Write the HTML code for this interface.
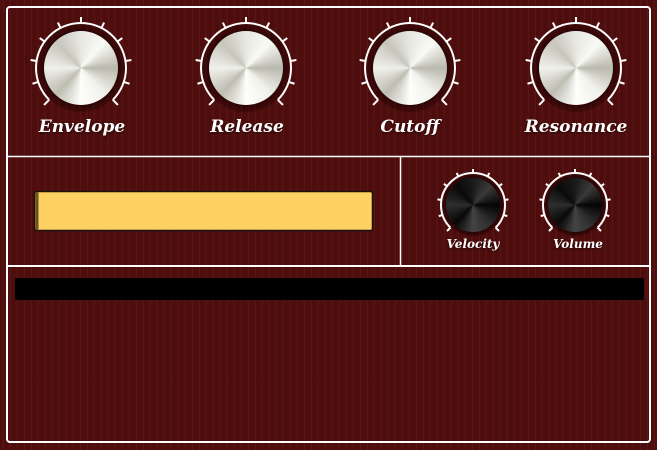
<!DOCTYPE html>
<html><head><meta charset="utf-8"><style>
html,body{margin:0;padding:0}
body{width:657px;height:450px;overflow:hidden;position:relative;
background:#520e0e;
background-image:repeating-linear-gradient(90deg,rgba(0,0,0,.08) 0 1px,rgba(255,255,255,0) 1px 3px,rgba(255,255,255,.03) 3px 4px,rgba(0,0,0,.05) 4px 7px);
font-family:"DejaVu Serif","Liberation Serif",serif;}
.abs{position:absolute}
.knob{position:absolute;border-radius:50%;}
.silver{background:conic-gradient(#e8e8e2,#fafaf5 12%,#b9b9ae 25%,#f2f2ec 38%,#fefefa 50%,#bdbdb2 62%,#f0f0ea 75%,#c6c6bc 88%,#e8e8e2);box-shadow:0 0 3px 2px rgba(0,0,0,.35)}
.black{background:conic-gradient(#1a1a1a,#3a3a3a 12%,#050505 25%,#2d2d2d 38%,#444 50%,#080808 62%,#2e2e2e 75%,#0a0a0a 88%,#1a1a1a);box-shadow:0 0 3px 2px rgba(0,0,0,.4)}
.lbl{position:absolute;color:#fff;font-weight:bold;font-style:italic;text-align:center;transform:translateX(-50%);white-space:nowrap;text-shadow:0 1px 2px rgba(0,0,0,.6)}
</style></head><body>
<svg class="abs" style="left:0;top:0" width="657" height="450" id="s">
<rect x="7" y="7" width="643" height="435" rx="3" fill="none" stroke="#fff" stroke-width="2"/>
<line x1="7" y1="156.5" x2="650" y2="156.5" stroke="#fff" stroke-width="1.5"/>
<line x1="7" y1="266" x2="650" y2="266" stroke="#fff" stroke-width="2"/>
<line x1="400.5" y1="157" x2="400.5" y2="266" stroke="#fff" stroke-width="1.5"/>
<rect x="34.5" y="191.5" width="338" height="39" rx="2" fill="#fed262" stroke="#1a1208" stroke-width="1.5"/>
<rect x="35.5" y="192.5" width="3" height="37" fill="#6b5320"/>
<rect x="15" y="278" width="629" height="22" rx="2" fill="#000"/>
</svg>
<div class="knob silver" style="left:44px;top:31px;width:74px;height:74px"></div>
<div class="knob silver" style="left:209px;top:31px;width:74px;height:74px"></div>
<div class="knob silver" style="left:373px;top:31px;width:74px;height:74px"></div>
<div class="knob silver" style="left:539px;top:31px;width:74px;height:74px"></div>
<div class="knob black" style="left:446px;top:178px;width:54px;height:54px"></div>
<div class="knob black" style="left:548px;top:178px;width:54px;height:54px"></div>
<div class="lbl" style="left:82px;top:117px;font-size:17px">Envelope</div>
<div class="lbl" style="left:247px;top:117px;font-size:17px">Release</div>
<div class="lbl" style="left:410px;top:117px;font-size:17px">Cutoff</div>
<div class="lbl" style="left:576px;top:117px;font-size:17px">Resonance</div>
<div class="lbl" style="left:473px;top:237px;font-size:12px">Velocity</div>
<div class="lbl" style="left:578px;top:237px;font-size:12px">Volume</div>
<script>
var s=document.getElementById('s'),NS='http://www.w3.org/2000/svg';
function dial(cx,cy,r,t){
 var c=document.createElementNS(NS,'circle');c.setAttribute('cx',cx);c.setAttribute('cy',cy);c.setAttribute('r',r-1);c.setAttribute('fill','rgba(30,0,0,.35)');s.appendChild(c);
 var a0=225*Math.PI/180,a1=-45*Math.PI/180;
 var p=document.createElementNS(NS,'path');
 var x0=cx+r*Math.cos(a0),y0=cy-r*Math.sin(a0),x1=cx+r*Math.cos(a1),y1=cy-r*Math.sin(a1);
 p.setAttribute('d','M'+x0+' '+y0+' A'+r+' '+r+' 0 1 1 '+x1+' '+y1);
 p.setAttribute('fill','none');p.setAttribute('stroke','#fff');p.setAttribute('stroke-width','2');s.appendChild(p);
 for(var i=0;i<=10;i++){var a=(225-27*i)*Math.PI/180;var l=document.createElementNS(NS,'line');
  var ro=(i==0||i==10)?r+t*1.2:r+t;
  l.setAttribute('x1',cx+r*Math.cos(a));l.setAttribute('y1',cy-r*Math.sin(a));
  l.setAttribute('x2',cx+ro*Math.cos(a));l.setAttribute('y2',cy-ro*Math.sin(a));
  l.setAttribute('stroke','#fff');l.setAttribute('stroke-width','2');s.appendChild(l);}
}
dial(81,68,45,6);dial(246,68,45,6);dial(410,68,45,6);dial(576,68,45,6);
dial(473,205,32,4);dial(575,205,32,4);
</script>
</body></html>
